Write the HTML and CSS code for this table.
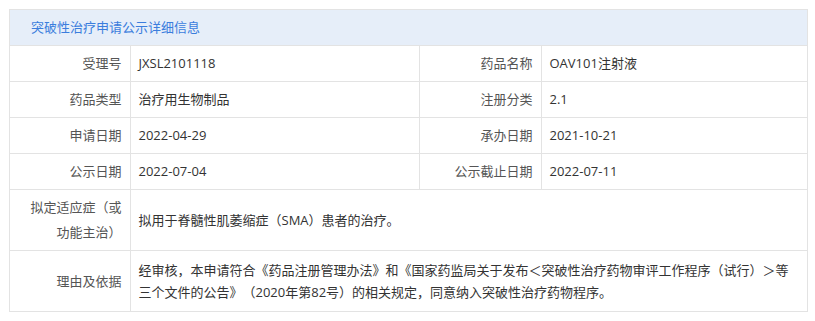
FILE: index.html
```html
<!DOCTYPE html>
<html lang="zh-CN">
<head>
<meta charset="utf-8">
<title>突破性治疗申请公示详细信息</title>
<link rel="stylesheet" href="styles.css">
</head>
<body>
<div class="panel">
  <div class="panel-head">突破性治疗申请公示详细信息</div>
  <table class="detail">
    <colgroup>
      <col class="c-label1">
      <col class="c-value1">
      <col class="c-label2">
      <col class="c-value2">
    </colgroup>
    <tr>
      <th>受理号</th><td>JXSL2101118</td>
      <th>药品名称</th><td>OAV101注射液</td>
    </tr>
    <tr>
      <th>药品类型</th><td>治疗用生物制品</td>
      <th>注册分类</th><td>2.1</td>
    </tr>
    <tr>
      <th>申请日期</th><td>2022-04-29</td>
      <th>承办日期</th><td>2021-10-21</td>
    </tr>
    <tr>
      <th>公示日期</th><td>2022-07-04</td>
      <th>公示截止日期</th><td>2022-07-11</td>
    </tr>
    <tr>
      <th class="wrap">拟定适应症（或<br>功能主治）</th>
      <td colspan="3">拟用于脊髓性肌萎缩症（SMA）患者的治疗。</td>
    </tr>
    <tr>
      <th>理由及依据</th>
      <td colspan="3" class="long">经审核，本申请符合《药品注册管理办法》和《国家药监局关于发布＜突破性治疗药物审评工作程序（试行）＞等三个文件的公告》（2020年第82号）的相关规定，同意纳入突破性治疗药物程序。</td>
    </tr>
  </table>
</div>
</body>
</html>
```

FILE: styles.css
```css
html, body {
  background: #ffffff;
}
body {
  margin: 9px 7px 9px 9px;
  font-family: "Open Sans", "Noto Sans CJK SC", sans-serif;
  font-size: 13px;
  color: #333333;
  text-spacing-trim: space-all;
}
.panel {
  border: 1px solid #e3e3e3;
}
.panel-head {
  height: 35px;
  line-height: 35px;
  padding-left: 21px;
  background: #e6eef9;
  color: #3b7ddd;
  font-size: 13px;
}
.detail {
  width: 100%;
  border-collapse: collapse;
  table-layout: fixed;
}
.c-label1 { width: 120px; }
.c-value1 { width: 289px; }
.c-label2 { width: 122px; }
.detail th,
.detail td {
  border: 1px solid #e3e3e3;
  padding: 5px 8px;
  line-height: 25px;
  vertical-align: middle;
  font-size: 13px;
}
.detail tr > :first-child { border-left: none; }
.detail tr > :last-child { border-right: none; }
.detail tr:last-child th,
.detail tr:last-child td { border-bottom: none; }
.detail th {
  font-weight: normal;
  text-align: right;
  color: #555555;
  white-space: nowrap;
}
.detail td {
  text-align: left;
  color: #333333;
}
.detail td.long {
  line-height: 22px;
  padding-top: 8px;
  padding-bottom: 8px;
}
```
